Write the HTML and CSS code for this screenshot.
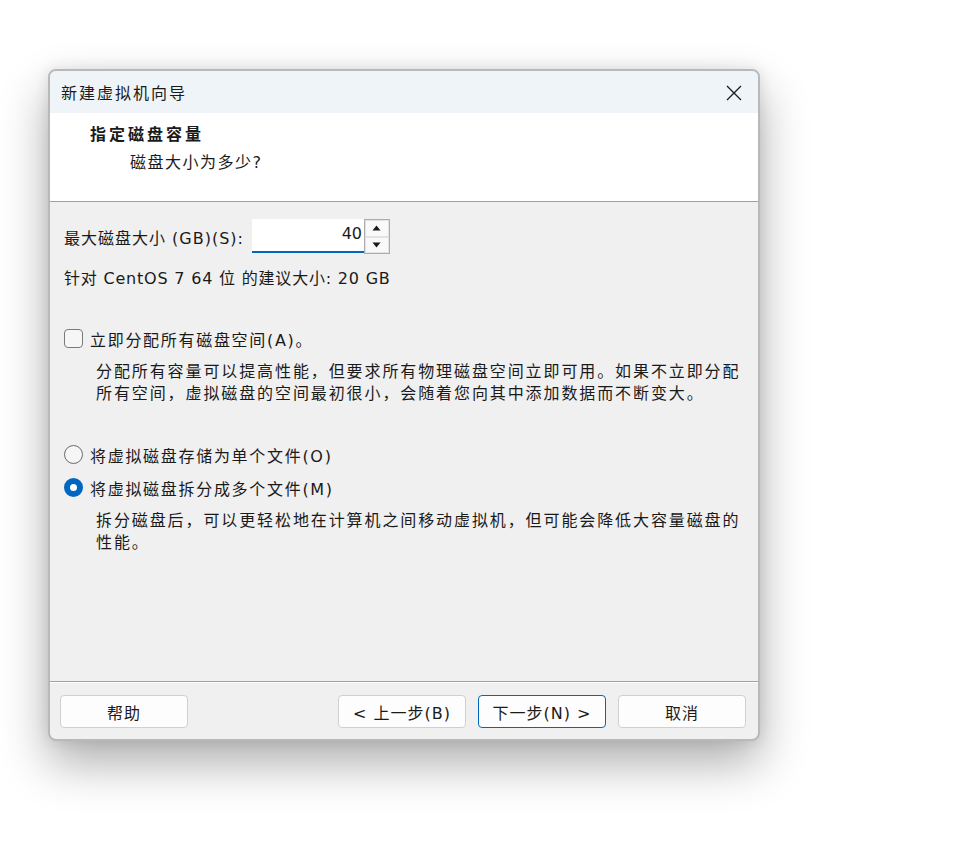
FILE: index.html
```html
<!DOCTYPE html>
<html lang="zh-CN">
<head>
    <meta charset="UTF-8">
    <meta name="viewport" content="width=device-width, initial-scale=1.0">
    <title>新建虚拟机向导</title>
    <link rel="stylesheet" href="styles.css">
</head>
<body>
<div class="window">
    <div class="titlebar">
        <span class="title">新建虚拟机向导</span>
        <span class="close">
            <svg width="16" height="16" viewBox="0 0 16 16"><path d="M1 1 L15 15 M15 1 L1 15" stroke="#1a1a1a" stroke-width="1.3" fill="none"/></svg>
        </span>
    </div>

    <div class="header">
        <div class="header-title">指定磁盘容量</div>
        <div class="header-sub">磁盘大小为多少?</div>
    </div>

    <div class="content">
        <div class="size-row">
            <label class="size-label">最大磁盘大小 (GB)(S):</label>
            <div class="spin">
                <div class="spin-input">40</div>
                <div class="spin-buttons">
                    <span class="spin-btn"><svg width="9" height="6" viewBox="0 0 9 6"><path d="M0.5 5.5 L4.5 0.5 L8.5 5.5 Z" fill="#1a1a1a"/></svg></span>
                    <span class="spin-btn"><svg width="9" height="6" viewBox="0 0 9 6"><path d="M0.5 0.5 L4.5 5.5 L8.5 0.5 Z" fill="#1a1a1a"/></svg></span>
                </div>
            </div>
        </div>
        <div class="hint">针对 CentOS 7 64 位 的建议大小: 20 GB</div>

        <div class="option check-row">
            <span class="checkbox"></span>
            <span>立即分配所有磁盘空间(A)。</span>
        </div>
        <p class="desc">分配所有容量可以提高性能，但要求所有物理磁盘空间立即可用。如果不立即分配<br>所有空间，虚拟磁盘的空间最初很小，会随着您向其中添加数据而不断变大。</p>

        <div class="option radio-row first">
            <span class="radio"></span>
            <span>将虚拟磁盘存储为单个文件(O)</span>
        </div>
        <div class="option radio-row">
            <span class="radio checked"></span>
            <span>将虚拟磁盘拆分成多个文件(M)</span>
        </div>
        <p class="desc">拆分磁盘后，可以更轻松地在计算机之间移动虚拟机，但可能会降低大容量磁盘的<br>性能。</p>
    </div>

    <div class="footer">
        <button class="btn">帮助</button>
        <div class="spacer"></div>
        <button class="btn">&lt; 上一步(B)</button>
        <button class="btn primary">下一步(N) &gt;</button>
        <button class="btn">取消</button>
    </div>
</div>
</body>
</html>
```

FILE: styles.css
```css
html, body {
    min-height: 100%;
}
body {
    box-sizing: border-box;
    min-height: 861px;
    margin: 0;
    padding: 69px 0 0 48px;
    background-color: #ffffff;
    font-family: "DejaVu Sans", "Noto Sans CJK SC", sans-serif;
    font-size: 16px;
    color: #1a1a1a;
}
.window {
    box-sizing: border-box;
    width: 712px;
    height: 672px;
    border: 2px solid #b9b9b9;
    border-radius: 8px;
    background-color: #f0f0f0;
    display: flex;
    flex-direction: column;
    overflow: hidden;
    box-shadow: 0 22px 48px rgba(0, 0, 0, 0.32), 0 0 14px rgba(0, 0, 0, 0.1);
}
.titlebar {
    height: 42px;
    flex-shrink: 0;
    background-color: #eef4f7;
    display: flex;
    align-items: center;
    justify-content: space-between;
    padding: 0 16px 0 11px;
}
.title {
    letter-spacing: 2px;
}
.close {
    display: flex;
    margin-top: 2px;
}
.header {
    box-sizing: border-box;
    height: 89px;
    flex-shrink: 0;
    background-color: #ffffff;
    border-bottom: 1px solid #a0a0a0;
    padding: 11px 0 0 40px;
}
.header-title {
    font-weight: bold;
    letter-spacing: 3px;
    line-height: 22px;
}
.header-sub {
    margin: 6px 0 0 40px;
    line-height: 22px;
    letter-spacing: 1.5px;
}
.content {
    flex: 1;
    padding: 17px 0 0 14px;
}
.size-row {
    display: flex;
    align-items: center;
    height: 35px;
}
.size-label {
    letter-spacing: 1px;
    margin-top: 1px;
}
.spin {
    display: flex;
    margin-left: 8px;
}
.spin-input {
    box-sizing: border-box;
    width: 112px;
    height: 34px;
    background-color: #ffffff;
    border-bottom: 2px solid #0067c0;
    text-align: right;
    padding-right: 2px;
    line-height: 30px;
}
.spin-buttons {
    display: flex;
    flex-direction: column;
    border: 1px solid #adadad;
    width: 24px;
    height: 33px;
}
.spin-btn {
    flex: 1;
    display: flex;
    align-items: center;
    justify-content: center;
    background-color: #f9f9f9;
    border: 1px solid #e2e2e2;
}
.hint {
    margin-top: 14px;
    line-height: 21px;
    letter-spacing: 0.8px;
}
.option {
    display: flex;
    align-items: center;
    height: 21px;
    letter-spacing: 1.7px;
}
.check-row {
    margin-top: 39px;
}
.checkbox {
    box-sizing: border-box;
    width: 19px;
    height: 19px;
    border: 1.5px solid #7a7a7a;
    border-radius: 4px;
    background-color: #f6f6f6;
    margin-right: 7px;
}
.desc {
    margin: 12px 0 0 32px;
    line-height: 21.5px;
    letter-spacing: 1.9px;
    white-space: nowrap;
}
.radio-row {
    margin-top: 12px;
}
.radio-row.first {
    margin-top: 40px;
}
.radio {
    box-sizing: border-box;
    width: 19px;
    height: 19px;
    border: 1.2px solid #6a6a6a;
    border-radius: 50%;
    background-color: #f6f6f6;
    margin-right: 7px;
}
.radio.checked {
    border: 6px solid #0067c0;
    background-color: #ffffff;
}
.footer {
    box-sizing: border-box;
    flex-shrink: 0;
    height: 58px;
    border-top: 1px solid #a0a0a0;
    box-shadow: inset 0 1px 0 #ffffff;
    display: flex;
    align-items: flex-start;
    gap: 12px;
    padding: 13px 12px 0 10px;
}
.spacer {
    flex: 1;
}
.btn {
    box-sizing: border-box;
    width: 128px;
    height: 33px;
    border: 1px solid #d0d0d0;
    border-radius: 4px;
    background-color: #fdfdfd;
    font-family: "DejaVu Sans", "Noto Sans CJK SC", sans-serif;
    font-size: 16px;
    letter-spacing: 1px;
    color: #1a1a1a;
    padding: 0;
}
.btn.primary {
    border-color: #0067c0;
}
```
